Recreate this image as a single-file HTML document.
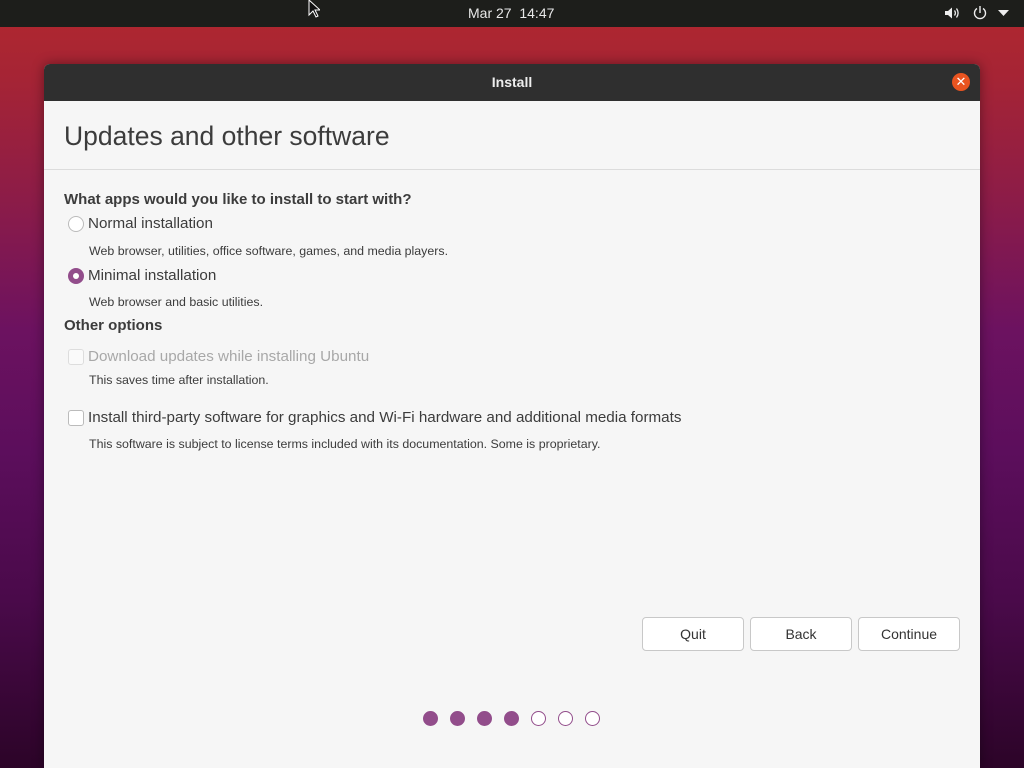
<!DOCTYPE html>
<html><head><meta charset="utf-8"><style>
*{margin:0;padding:0;box-sizing:border-box}
body{width:1024px;height:768px;overflow:hidden;position:relative;font-family:"Liberation Sans","DejaVu Sans",sans-serif;background:linear-gradient(180deg,#b2282e 0px,#a52435 80px,#8c1c48 200px,#6c1260 330px,#5c0e5c 450px,#4a0a4a 600px,#2c0428 768px)}
.top{position:absolute;left:0;top:0;width:1024px;height:27px;background:#1d1e1b;color:#e8e8e8;font-size:14px}
.win{position:absolute;left:44px;top:64px;width:936px;height:704px;background:#f6f6f6;border-radius:6px 6px 0 0;overflow:hidden;box-shadow:0 0 12px rgba(0,0,0,.4)}
.tb{height:37px;background:#2f2f2f;color:#eee;font-weight:bold;font-size:14px;text-align:center;line-height:37px}
.a{position:absolute;white-space:nowrap;color:#3c3c3c}
.lbl{font-size:15.2px}
.sm{font-size:12.4px}
.b{font-weight:bold;font-size:15px}
.btn{position:absolute;top:553px;width:102px;height:34px;background:#fff;border:1px solid #c8c8c8;border-radius:4px;font-size:14px;color:#333;text-align:center;line-height:32px}
.dot{position:absolute;top:647px;width:15px;height:15px;border-radius:50%;border:1.5px solid #924d8b}
</style></head><body>
<div class="top">
<div style="position:absolute;left:468px;top:5px">Mar 27&nbsp;&nbsp;14:47</div>
<svg style="position:absolute;left:944px;top:6px" width="16" height="14" viewBox="0 0 16 14"><path d="M1 5h3l4-3.5v11L4 9H1z" fill="#eee"/><path d="M10.5 4.5q1.8 2.5 0 5M12.5 2.5q3.2 4.5 0 9" stroke="#eee" stroke-width="1.3" fill="none"/></svg>
<svg style="position:absolute;left:972px;top:5px" width="16" height="16" viewBox="0 0 16 16"><path d="M5 3.5A5.5 5.5 0 1 0 11 3.5" stroke="#eee" stroke-width="1.4" fill="none"/><path d="M8 1v7" stroke="#eee" stroke-width="1.4"/></svg>
<svg style="position:absolute;left:998px;top:10px" width="11" height="7" viewBox="0 0 11 7"><path d="M0 0h11L5.5 6z" fill="#eee"/></svg>
<svg style="position:absolute;left:308px;top:0" width="12" height="18" viewBox="0 0 12 18"><path d="M1 0v15l4-4 3 6 2-1-3-6h5z" fill="#111" stroke="#fff" stroke-width="1"/></svg>
</div>
<div class="win">
<div class="tb">Install</div>
<div style="position:absolute;left:908px;top:9px;width:18px;height:18px;border-radius:50%;background:#e95420;color:#fff;font-size:13px;line-height:18px;text-align:center">✕</div>
<div class="a" style="left:20px;top:57px;font-size:26.5px;color:#3c3c3c">Updates and other software</div>
<div style="position:absolute;left:0;top:105px;width:936px;height:1px;background:#dcdcdc"></div>
<div class="a b" style="left:20px;top:127px">What apps would you like to install to start with?</div>
<div style="position:absolute;left:24px;top:152px;width:16px;height:16px;border-radius:50%;border:1px solid #bbb;background:#fff"></div>
<div class="a lbl" style="left:44px;top:151px">Normal installation</div>
<div class="a sm" style="left:45px;top:180px">Web browser, utilities, office software, games, and media players.</div>
<div style="position:absolute;left:24px;top:204px;width:16px;height:16px;border-radius:50%;background:#924d8b"><div style="position:absolute;left:5px;top:5px;width:6px;height:6px;border-radius:50%;background:#fff"></div></div>
<div class="a lbl" style="left:44px;top:203px">Minimal installation</div>
<div class="a sm" style="left:45px;top:231px">Web browser and basic utilities.</div>
<div class="a b" style="left:20px;top:253px">Other options</div>
<div style="position:absolute;left:24px;top:285px;width:16px;height:16px;border-radius:3px;border:1px solid #ddd;background:#fafafa"></div>
<div class="a lbl" style="left:44px;top:284px;color:#a8a8a8">Download updates while installing Ubuntu</div>
<div class="a sm" style="left:45px;top:309px">This saves time after installation.</div>
<div style="position:absolute;left:24px;top:346px;width:16px;height:16px;border-radius:3px;border:1px solid #bbb;background:#fff"></div>
<div class="a lbl" style="left:44px;top:345px">Install third-party software for graphics and Wi-Fi hardware and additional media formats</div>
<div class="a sm" style="left:45px;top:373px">This software is subject to license terms included with its documentation. Some is proprietary.</div>
<div class="btn" style="left:598px">Quit</div>
<div class="btn" style="left:706px">Back</div>
<div class="btn" style="left:814px">Continue</div>
<div class="dot" style="left:379px;background:#924d8b"></div>
<div class="dot" style="left:406px;background:#924d8b"></div>
<div class="dot" style="left:433px;background:#924d8b"></div>
<div class="dot" style="left:460px;background:#924d8b"></div>
<div class="dot" style="left:487px;background:#fff"></div>
<div class="dot" style="left:514px;background:#fff"></div>
<div class="dot" style="left:541px;background:#fff"></div>
</div>
</body></html>
